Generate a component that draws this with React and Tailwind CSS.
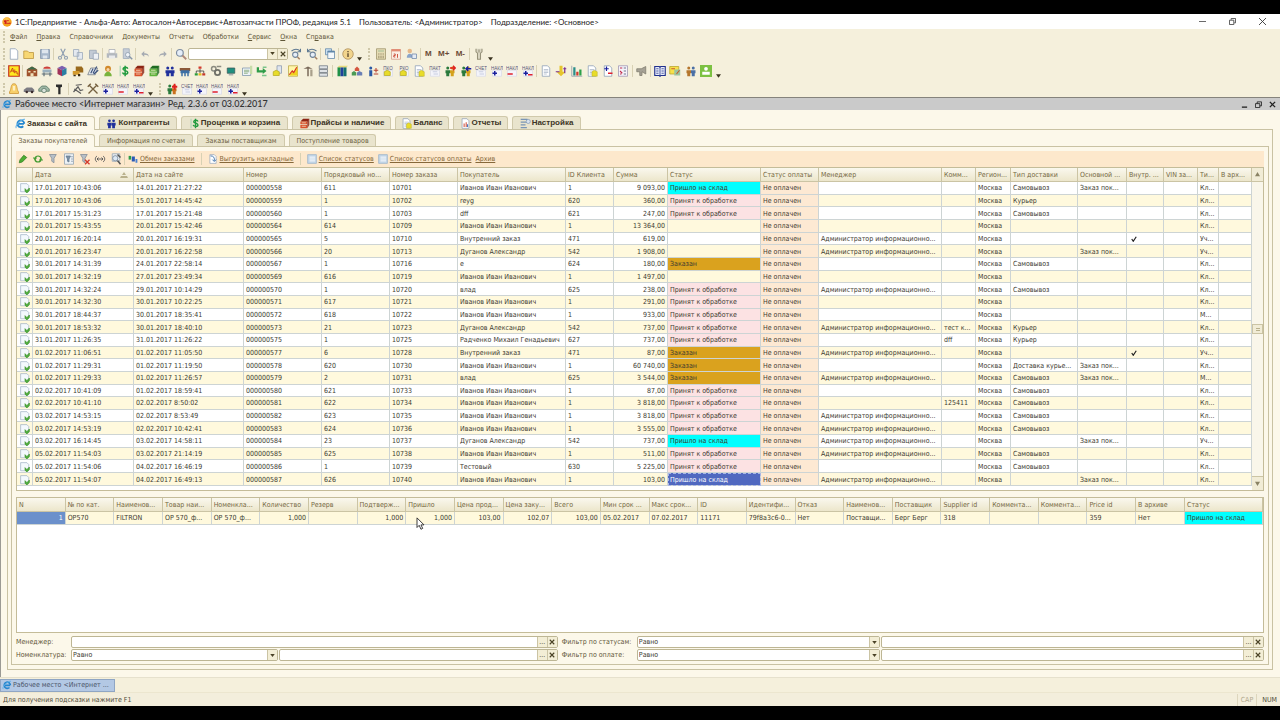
import React, { useState } from 'react';
import clsx from 'clsx';

const doc = <path d="M3 1h7l3 3v11H3z" fill="#fff" stroke="#8a9cb4" />;
const lines = <path d="M5 6h6M5 8h6M5 10h6M5 12h4" stroke="#a9b6c8" />;

const labelled = (label, extra) => (
    <>
        <path d="M2 7h12v8H2z" fill="#f4f4fa" stroke="#d9dbe8" />
        <text x="8" y="6" fontSize="6" textAnchor="middle" fill="#55557a" fontFamily="Liberation Sans">{label}</text>
        {extra}
    </>
);
const plus = <path d="M2 11h6M5 8v6" stroke="#1a1f9c" strokeWidth="2" />;
const minus = <path d="M2 12h7" stroke="#e0202c" strokeWidth="2" />;
const box = <path d="M3 9l4-2 4 2v5H3z" fill="#e8dc2a" stroke="#b5a91c" />;

const people = (a, b) => (
    <>
        <circle cx="5" cy="4" r="2" fill={a} />
        <path d="M2 7h6v4H7v4H3v-4H2z" fill={a} />
        <circle cx="11" cy="4" r="2" fill={b} />
        <path d="M8 7h6v4h-1v4H9v-4H8z" fill={b} />
    </>
);
const books = (top, side) => (
    <>
        <path d="M3 4l3-3h9l-2 4H3z" fill={top} />
        <path d="M2 5h10v4H2zM2 10h10v5H2z" fill={side} />
        <path d="M12 5l3-4v9l-3 5z" fill={top} opacity=".8" />
        <path d="M4 7h6M4 12h6" stroke="#f4ead0" />
    </>
);
const funnel = <path d="M2 2h9L8 7v6l-3-2V7z" fill="#b9c0c8" stroke="#7f8a96" />;

const icons = {
    onec: <><circle cx="8" cy="8" r="7.5" fill="#f5a21c" /><circle cx="7" cy="6" r="5" fill="#f9c24a" /><path d="M3 7l2-1v5M11 6H8a2 2 0 0 0 0 4h6" fill="none" stroke="#d1201b" strokeWidth="1.8" /></>,
    ie: <><path d="M13 8.500H4M13.500 8.500a5 5 0 1 0-1.500 3.500" fill="none" stroke="#2486cf" strokeWidth="2.600" /><path d="M2 14.500C-1 12 9 1 14.500 2" fill="none" stroke="#67b4e8" strokeWidth="1.600" /></>,
    blank: doc,
    folder: <path d="M1 4h5l2 2h6v8H1z" fill="#f7d774" stroke="#b8923a" />,
    save: <><path d="M2 2h12v12H2z" fill="#a9b9cc" stroke="#8093ab" /><path d="M4 2h8v5H4zM5 10h6v4H5z" fill="#dfe6ee" /></>,
    cut: <><path d="M5 1l5 10M11 1L6 11" stroke="#8f9eb0" strokeWidth="1.6" /><circle cx="4" cy="13" r="2" fill="none" stroke="#8f9eb0" strokeWidth="1.5" /><circle cx="12" cy="13" r="2" fill="none" stroke="#8f9eb0" strokeWidth="1.5" /></>,
    copy: <path d="M2 2h7v9H2zM7 6h7v9H7z" fill="#e4e9f0" stroke="#98a6b8" />,
    paste: <><path d="M2 3h9v11H2z" fill="#c2cad5" stroke="#93a0b1" /><path d="M7 7h7v8H7z" fill="#eef1f5" stroke="#93a0b1" /></>,
    print: <><path d="M4 2h8v5H4z" fill="#fff" stroke="#a5aab2" /><path d="M1 7h14v6H1z" fill="#b3b8bf" /><path d="M4 10h8v4H4z" fill="#e9eaec" /></>,
    preview: <><path d="M3 1h8v13H3z" fill="#c7ced8" stroke="#9ba8b8" /><circle cx="9" cy="9" r="3" fill="#eef2f7" stroke="#8796a8" /><path d="M11 11l4 4" stroke="#8796a8" strokeWidth="2" /></>,
    undo: <path d="M7 4L3 8l4 4V9c4 0 5 1 6 3 0-4-2-5-6-5z" fill="#a6abb2" />,
    redo: <path d="M9 4l4 4-4 4V9c-4 0-5 1-6 3 0-4 2-5 6-5z" fill="#a6abb2" />,
    search: <><circle cx="6.5" cy="6.5" r="4.5" fill="#e6eef8" stroke="#7f8ea2" strokeWidth="1.6" /><path d="M10 10l5 5" stroke="#b08a7a" strokeWidth="2.4" /></>,
    findNext: <><circle cx="7" cy="9" r="3.5" fill="#e6eef8" stroke="#71859b" strokeWidth="1.4" /><path d="M10 12l3 3" stroke="#a37f62" strokeWidth="2" /><path d="M2 4c4-3 8-3 12 0M14 1v4h-4" fill="none" stroke="#5d7891" strokeWidth="1.4" /></>,
    findPrev: <><circle cx="9" cy="9" r="3.5" fill="#e6eef8" stroke="#71859b" strokeWidth="1.4" /><path d="M12 12l3 3" stroke="#a37f62" strokeWidth="2" /><path d="M2 4c4-3 8-3 12 0M2 1v4h4" fill="none" stroke="#5d7891" strokeWidth="1.4" /></>,
    windows: <><path d="M2 1h8v8H2z" fill="#c9dff0" stroke="#5f86a8" /><path d="M5 4h9v10H5z" fill="#f3f8fc" stroke="#5f86a8" /><path d="M5 5h9" stroke="#5f86a8" strokeWidth="2" /></>,
    info: <><circle cx="8" cy="8" r="7" fill="#f2d48c" stroke="#a98a55" /><path d="M8 7v5M8 4v1.5" stroke="#6b5636" strokeWidth="2" /></>,
    calc: <><path d="M2 1h12v14H2z" fill="#e5dcb4" stroke="#9c9168" /><path d="M4 3h8v2H4z" fill="#b7c9a0" /><path d="M4 8h8M4 11h8M4 13h8" stroke="#8d7f5c" strokeDasharray="2 1" /></>,
    calendar: <><path d="M2 2h12v13H2z" fill="#fbeee4" stroke="#d09c88" /><path d="M2 3h12" stroke="#e28a72" strokeWidth="3" /><path d="M5 8h2v2H5v2h2M10 8v5" fill="none" stroke="#c94632" strokeWidth="1.2" /></>,
    userLock: <><circle cx="5" cy="4" r="3" fill="#e6b889" /><path d="M1 13c0-7 8-7 8 0z" fill="#8aa4c9" /><path d="M8 8h6v6H8z" fill="#e5ebf4" stroke="#6f87a8" /></>,
    wrench: <path d="M4 1v4l2 2v8h4V7l2-2V1M8 2v4" fill="#d9d5c2" stroke="#969179" strokeWidth="1.4" />,
    an: <><path d="M1 1h14v14H1z" fill="#ffe91f" stroke="#c4301c" strokeWidth="1.6" /><path d="M3 10l3-6 2 6M4 8h3M9 11V6M9 9h3v3h2" fill="none" stroke="#c4301c" strokeWidth="1.1" /></>,
    house: <><path d="M1 6l7-4 7 4v9H1z" fill="#a0522d" /><path d="M1 6l7-4 7 4z" fill="#3b6b4a" /><path d="M3 8h3v2H3zM10 8h3v2h-3zM6 11h4v4H6z" fill="#f0e2bb" /></>,
    bench: <><path d="M3 5c0-4 10-4 10 0z" fill="#cc3f3a" /><path d="M2 6h12v4H2z" fill="#9ab0be" /><path d="M4 10v5M12 10v5M1 12h14" stroke="#5f6f78" strokeWidth="1.6" /></>,
    cube: <><path d="M2 4l6-3 6 3-6 3z" fill="#7d5fb0" /><path d="M2 4l6 3v8l-6-3z" fill="#a0325a" /><path d="M14 4L8 7v8l6-3z" fill="#2b7fa3" /></>,
    carGold: <><path d="M5 2h8l2 3v5H5z" fill="#9a6a1c" /><path d="M1 8h9v5H1z" fill="#d49a2c" /><path d="M2 13h3v2H2zM8 12h3v3H8z" fill="#3c2c12" /></>,
    notes: <><path d="M1 13l4-9h9l-3 9z" fill="#e4e8ee" stroke="#6b7480" /><path d="M5 11l3-6M8 11l5-9M9 12l6-5" stroke="#39507c" strokeWidth="1.5" /></>,
    person: <><circle cx="8" cy="5" r="4" fill="#d28a2c" /><circle cx="8" cy="6" r="2" fill="#f6d7ae" /><path d="M3 15c0-8 10-8 10 0z" fill="#79b33c" /></>,
    dollar: <><path d="M2 1h2v14H2z" fill="#b9d9bb" /><path d="M13 5c-1-3-7-2-6 1 1 2 6 1 6 4s-6 3-7 0M9.500 1v14" fill="none" stroke="#1f9a3d" strokeWidth="2" /></>,
    booksRed: books('#8c2414', '#d9522c'),
    booksGreen: books('#1f6b22', '#5fb33c'),
    peopleBlue: people('#20309c', '#20309c'),
    crowd: <><path d="M1 4h14v4H1z" fill="#8c5a3a" /><path d="M2 7h12v4H2zM3 11h2v4H3zM7 11h2v4H7zM11 11h2v4h-2z" fill="#3c6fa5" /></>,
    tree: <><path d="M8 5v3M3 11V8h10v3M8 8v3" fill="none" stroke="#333" /><path d="M6 2h4v3H6z" fill="#d33b2c" /><path d="M1 11h4v3H1z" fill="#2c9c3a" /><path d="M6 11h4v3H6z" fill="#e5b91c" /><path d="M11 11h4v3h-4z" fill="#c43a2c" /></>,
    gears: <><circle cx="5" cy="5" r="3" fill="none" stroke="#8b8b80" strokeWidth="2" /><circle cx="10" cy="10" r="3.500" fill="none" stroke="#6f7068" strokeWidth="2.400" /><path d="M9 2h6" stroke="#8b8b80" strokeWidth="2" /></>,
    monitor: <><path d="M3 4h10v7H3z" fill="#1f8f7f" stroke="#3c5a5a" /><path d="M5 13h6" stroke="#aab2b2" strokeWidth="2" /></>,
    sheetGreen: <><path d="M2 4h11v10H2z" fill="#eef3f7" stroke="#7b93a8" /><path d="M4 7h7M4 9h7M4 11h5" stroke="#7aa06b" /><path d="M12 1h3v11h-3z" fill="#c7dca8" /></>,
    exchange: <><path d="M1 3h3v4h5V4l5 4-5 4v-2H1z" fill="#2f9c48" /><path d="M9 2h5v2H9zM8 13h6v2H8z" fill="#7cc48a" /></>,
    boxDoc: <><path d="M8 1h6v10H8z" fill="#dfe5ee" stroke="#8a98ae" />{box}</>,
    chart: <><path d="M2 1h12v14H2z" fill="#fff7a8" stroke="#b9a645" /><path d="M3 14l4-5 2 2 5-8v11z" fill="#f0d21c" /><path d="M3 13l4-5 2 2 4-7" fill="none" stroke="#d8321f" strokeWidth="1.6" /></>,
    lift: <><path d="M2 5l6-3 6 3H2zM7 5h2v10H7z" fill="#7a6a5a" /><path d="M11 6h3v9h-3z" fill="#a9a08c" /></>,
    rack: <path d="M3 1h11v4H3zM3 6h11v4H3zM3 11h11v4H3z" fill="#dfe3e6" stroke="#6d7780" />,
    volumes: <><path d="M2 3h4v12H2z" fill="#1f9148" /><path d="M6 3h4v12H6z" fill="#21409c" /><path d="M10 3h4v12h-4z" fill="#13706f" /><path d="M2 3l2-2h12l-2 2z" fill="#e5d97a" /></>,
    blocks: <><path d="M5 5l3-3 3 3v3H5z" fill="#d4553f" /><path d="M1 10l3-2 3 2v4H1z" fill="#4a9a55" /><path d="M8 10l3-2 4 2v4H8z" fill="#6a7fb5" /></>,
    personPlus: <><circle cx="5" cy="4" r="2" fill="#2a59a5" /><path d="M3 7h4v8H3z" fill="#2a59a5" /><path d="M9 7h6M12 4v6M9 12h6" stroke="#b5402f" strokeWidth="1.400" /></>,
    pko: labelled('ПКО', box),
    rko: labelled('РКО', box),
    docBox: <>{doc}{lines}<path d="M8 9l3-2 4 2v6H8z" fill="#e8dc2a" stroke="#b5a91c" strokeWidth=".6" /></>,
    pact: labelled('ПАКТ', <path d="M5 9h6M6 12h6" stroke="#b9c0d8" />),
    peopleOut: <>{people('#2a7a3c', '#d4a11c')}<path d="M8 4h7M12 1l3 3-3 3" fill="none" stroke="#e02020" strokeWidth="2" /></>,
    peopleIn: <>{people('#2a7a3c', '#d4a11c')}<path d="M8 5h7M11 2L8 5l3 3" fill="none" stroke="#1a1f9c" strokeWidth="2" /></>,
    peopleAdd: <>{people('#2a7a3c', '#c9701c')}<path d="M8 5h7M11.500 1v8" stroke="#e02020" strokeWidth="2.400" /></>,
    bill: labelled('СЧЕТ', <path d="M5 9h6M6 12h6" stroke="#b9c0d8" />),
    naklPlus: labelled('НАКЛ', plus),
    naklMinus: labelled('НАКЛ', minus),
    naklBoth: labelled('НАКЛ', <>{plus}<path d="M8 13h6" stroke="#e0202c" strokeWidth="2" /></>),
    docs: <>{doc}{lines}</>,
    arrows: <><path d="M6 1h4v8h4l-6 6-6-6h4z" fill="#e6c52c" /><path d="M1 9h5M11 5h4M13 3v8" stroke="#7a2f8f" strokeWidth="1.600" /></>,
    bars: <><path d="M1 1v14h14" fill="none" stroke="#8c98a8" /><path d="M3 3h3v11H3z" fill="#2a8f8a" /><path d="M7 9h3v5H7z" fill="#d03a2c" /><path d="M11 6h3v8h-3z" fill="#2ca04a" /></>,
    docSigns: <>{doc}<path d="M3 5h6M6 2v6" stroke="#1a1f9c" strokeWidth="1.600" /><path d="M8 11h6" stroke="#e0202c" strokeWidth="2" /></>,
    docPercent: <><path d="M2 1h12v14H2z" fill="#f6f3fa" stroke="#9c94b0" /><path d="M4 4h3M4 8l3 3M4 12h2" stroke="#c02c4c" strokeWidth="1.500" /><path d="M9 4h3M9 8h3M9 12h3" stroke="#6f7890" strokeWidth="1.500" /></>,
    horn: <path d="M1 5h6l6-3v10L8 9v5H5V9H1z" fill="#a5a195" stroke="#7d796c" />,
    bookOpen: <><path d="M1 2h6l1 1 1-1h6v12H9l-1 1-1-1H1z" fill="#e8ecf8" stroke="#1f2f8c" strokeWidth="1.500" /><path d="M8 3v11M3 5h3M3 8h3M3 11h3M10 5h3M10 8h3M10 11h3" stroke="#1f2f8c" /></>,
    picture: <><path d="M1 2h12v10H1z" fill="#f7e04a" stroke="#b5a32c" /><path d="M7 6h8v8H7z" fill="#9cc5a0" /><path d="M3 5h5M10 12l4-5" stroke="#c55a2c" strokeWidth="1.500" /></>,
    couple: people('#b5762c', '#4a6fa5'),
    greenUser: <><path d="M0 0h16v16H0z" fill="#7cc142" /><circle cx="8" cy="5" r="2.500" fill="#fff" /><path d="M3 13V9h10v4z" fill="#fff" /></>,
    bell: <><path d="M8 1c5 0 3 7 6 11v2H2v-2C5 8 3 1 8 1z" fill="#f7cf6b" stroke="#c9902f" /><path d="M8 4v6" stroke="#fdf0c4" strokeWidth="3" /></>,
    carGrey: <><path d="M1 9l4-3h7l3 3v3H1z" fill="#7d7c83" /><circle cx="5" cy="12" r="1.700" fill="#3a2b2b" /><circle cx="12" cy="12" r="1.700" fill="#3a2b2b" /></>,
    carGreen: <><path d="M1 8l4-4h6l4 4v3H1z" fill="#9fb7a6" stroke="#547360" /><circle cx="8" cy="10" r="3" fill="#d9e2da" stroke="#547360" /></>,
    tool: <path d="M4 2h8v3l-2 1v9H7V6L4 5z" fill="#2b2b2b" />,
    runner: <path d="M2 12l6-7 3 5 4-1M5 3l8-1M3 8l9 6" fill="none" stroke="#5c5c5c" strokeWidth="1.600" />,
    hammers: <path d="M2 14L13 3M3 3l11 11M1 5l4-4M11 1l4 4" fill="none" stroke="#75603f" strokeWidth="1.800" />,
    pencil: <path d="M3 13l1-4 5-6 4 3-6 6z" fill="#4dae33" stroke="#2f7a1e" />,
    refresh: <path d="M4 7c1-4 7-4 8 0M12 9c-1 4-7 4-8 0M2 6l2 3 2-3M14 10l-2-3-2 3" fill="none" stroke="#3f9a2f" strokeWidth="1.600" />,
    funnel,
    funnelList: <><path d="M2 1h12v14H2z" fill="#eef2f6" stroke="#8fa0b2" /><path d="M4 4h6L8 8v4l-2-1V8zM11 5h2M11 8h2M11 11h2" fill="#7f93a8" stroke="#63788f" /></>,
    funnelOff: <>{funnel}<path d="M8 9l6 6M14 9l-6 6" stroke="#d2382c" strokeWidth="1.800" /></>,
    span: <path d="M4 4c-3 2-3 6 0 8M12 4c3 2 3 6 0 8M4 8h8M6 6L4 8l2 2M10 6l2 2-2 2" fill="none" stroke="#555" strokeWidth="1.200" />,
    searchDoc: <><path d="M3 1h10v10H3z" fill="#eef2f6" stroke="#8fa0b2" /><circle cx="7" cy="7" r="3.500" fill="#dce8f4" stroke="#6d7d90" /><path d="M10 10l4 5M10 2l4 4" stroke="#555" strokeWidth="2" /></>,
    swap: <><path d="M1 3h4v6H1z" fill="#2c9c48" /><path d="M6 4h5v8H6z" fill="#2a59b5" /><path d="M12 8h3v6h-3z" fill="#4a80d0" /></>,
    export: <>{doc}<path d="M4 3c5 0 7 3 6 8M7 9l3 3 3-3" fill="none" stroke="#4a7ab0" strokeWidth="1.600" /></>,
    list: <><path d="M1 1h14v14H1z" fill="#c3d6e8" stroke="#8fabc5" /><path d="M4 5h9M4 8h9M4 11h9" stroke="#fff" strokeWidth="1.400" /></>,
    report: <>{doc}<path d="M6 8v5M9 6v7" stroke="#d0503c" strokeWidth="1.500" /><path d="M11 9v4" stroke="#3c6fc0" strokeWidth="1.500" /></>,
    settings: <><path d="M1 2h10M1 6h9M1 10h7M1 14h9" stroke="#7a95b5" strokeWidth="2" /><circle cx="12" cy="5" r="3" fill="#d9e3ee" stroke="#7a95b5" /></>,
    rowDoc: <><path d="M1 1h10l3 3v10H1z" fill="#f4f9fd" stroke="#93a9bd" /><path d="M8 9l3 3 4-4v4l-4 4-3-3z" fill="#4fae3c" stroke="#3a8f2a" /></>,
};

const Icon = ({ name, className = 'size-[12px]' }) => (
    <svg viewBox="0 0 16 16" className={clsx('shrink-0', className)} aria-hidden="true">{icons[name]}</svg>
);

const menu = [
    ['', 'Ф', 'айл'], ['', 'П', 'равка'], ['Справочники', '', ''], ['Документы', '', ''], ['Отчеты', '', ''],
    ['Обработки', '', ''], ['', 'С', 'ервис'], ['', 'О', 'кна'], ['Сп', 'р', 'авка'],
];

const ToolGroup = ({ width = '', items }) => (
    <div className={clsx('flex justify-between shrink-0', width)}>
        {items.map((name, i) => (
            <button key={i} type="button" aria-label={name} className="flex w-[13px] h-[14px] items-center justify-center">
                <Icon name={name} />
            </button>
        ))}
    </div>
);

const Sep = () => <div className="flex w-[5px] shrink-0 justify-center"><span className="w-px h-[12px] bg-[#d8d1b4]" /></div>;
const Grip = ({ width = 'w-[7px]' }) => (
    <div className={clsx('flex shrink-0 justify-center', width)}><span className="h-[12px] border-l-2 border-dotted border-[#cfc8aa]" /></div>
);
const More = () => (
    <button type="button" aria-label="Еще" className="flex w-[10px] h-[14px] shrink-0 items-end justify-center">
        <svg viewBox="0 0 6 4" className="w-[5px] h-[4px]"><path d="M0 0h6L3 4z" fill="#3a3320" /></svg>
    </button>
);

const mainTabs = [
    { label: 'Заказы с сайта', icon: 'ie', width: 'w-[88px]' },
    { label: 'Контрагенты', icon: 'peopleBlue', width: 'w-[78px]' },
    { label: 'Проценка и корзина', icon: 'dollar', width: 'w-[107px]' },
    { label: 'Прайсы и наличие', icon: 'booksRed', width: 'w-[99px]' },
    { label: 'Баланс', icon: 'docBox', width: 'w-[54px]' },
    { label: 'Отчеты', icon: 'report', width: 'w-[55px]' },
    { label: 'Настройка', icon: 'settings', width: 'w-[69px]' },
];

const subTabs = [
    { label: 'Заказы покупателей', width: 'w-[84px]' },
    { label: 'Информация по счетам', width: 'w-[94px]' },
    { label: 'Заказы поставщикам', width: 'w-[88px]' },
    { label: 'Поступление товаров', width: 'w-[87px]' },
];

const orderColumns = [
    ['', 'w-[16px]'], ['Дата', 'w-[101px]'], ['Дата на сайте', 'w-[110px]'], ['Номер', 'w-[78px]'],
    ['Порядковый но...', 'w-[68px]'], ['Номер заказа', 'w-[68px]'], ['Покупатель', 'w-[108px]'],
    ['ID Клиента', 'w-[48px]'], ['Сумма', 'w-[54px]'], ['Статус', 'w-[93px]'], ['Статус оплаты', 'w-[58px]'],
    ['Менеджер', ''], ['Комм...', 'w-[34px]'], ['Регион...', 'w-[35px]'], ['Тип доставки', 'w-[67px]'],
    ['Основной ...', 'w-[49px]'], ['Внутр. ...', 'w-[37px]'], ['VIN за...', 'w-[34px]'], ['Ти...', 'w-[21px]'], ['В арх...', 'w-[33px]'],
];

const IVANOV = 'Иванов Иван Иванович';
const ADMIN = 'Администратор информационно...';
const READY = 'Пришло на склад';
const TAKEN = 'Принят к обработке';
const ORDERED = 'Заказан';
const PICKUP = 'Самовывоз';
const MAIN = 'Заказ пок...';

// date, site date, number, index, order, customer, client id, sum, status, manager, comment, delivery, main order, internal, type
const orders = [
    ['17.01.2017 10:43:06', '14.01.2017 21:27:22', '000000558', '611', '10701', IVANOV, '1', '9 093,00', READY, '', '', PICKUP, MAIN, false, 'Кл...'],
    ['17.01.2017 10:43:06', '15.01.2017 14:45:42', '000000559', '1', '10702', 'reyg', '620', '360,00', TAKEN, '', '', 'Курьер', '', false, 'Кл...'],
    ['17.01.2017 15:31:23', '17.01.2017 15:21:48', '000000560', '1', '10703', 'dff', '621', '247,00', TAKEN, '', '', PICKUP, '', false, 'Кл...'],
    ['20.01.2017 15:43:55', '20.01.2017 15:42:46', '000000564', '614', '10709', IVANOV, '1', '13 364,00', '', '', '', '', '', false, 'Кл...'],
    ['20.01.2017 16:20:14', '20.01.2017 16:19:31', '000000565', '5', '10710', 'Внутренний заказ', '471', '619,00', '', ADMIN, '', '', '', true, 'Уч...'],
    ['20.01.2017 16:23:47', '20.01.2017 16:22:58', '000000566', '20', '10713', 'Дуганов Александр', '542', '1 908,00', '', ADMIN, '', '', MAIN, false, 'Уч...'],
    ['30.01.2017 14:31:39', '24.01.2017 22:58:14', '000000567', '1', '10716', 'е', '624', '180,00', ORDERED, '', '', PICKUP, '', false, 'Кл...'],
    ['30.01.2017 14:32:19', '27.01.2017 23:49:34', '000000569', '616', '10719', IVANOV, '1', '1 497,00', '', '', '', '', '', false, 'Кл...'],
    ['30.01.2017 14:32:24', '29.01.2017 10:14:29', '000000570', '1', '10720', 'влад', '625', '238,00', TAKEN, ADMIN, '', PICKUP, '', false, 'Кл...'],
    ['30.01.2017 14:32:30', '30.01.2017 10:22:25', '000000571', '617', '10721', IVANOV, '1', '291,00', TAKEN, '', '', '', '', false, 'Кл...'],
    ['30.01.2017 18:44:37', '30.01.2017 18:35:41', '000000572', '618', '10722', IVANOV, '1', '933,00', TAKEN, '', '', '', '', false, 'М...'],
    ['30.01.2017 18:53:32', '30.01.2017 18:40:10', '000000573', '21', '10723', 'Дуганов Александр', '542', '737,00', TAKEN, ADMIN, 'тест к...', 'Курьер', '', false, 'Кл...'],
    ['31.01.2017 11:26:35', '31.01.2017 11:26:22', '000000575', '1', '10725', 'Радченко Михаил Генадьевич', '627', '737,00', TAKEN, '', 'dff', 'Курьер', '', false, 'Кл...'],
    ['01.02.2017 11:06:51', '01.02.2017 11:05:50', '000000577', '6', '10728', 'Внутренний заказ', '471', '87,00', ORDERED, ADMIN, '', '', '', true, 'Уч...'],
    ['01.02.2017 11:29:31', '01.02.2017 11:19:50', '000000578', '620', '10730', IVANOV, '1', '60 740,00', ORDERED, '', '', 'Доставка курье...', MAIN, false, 'Кл...'],
    ['01.02.2017 11:29:33', '01.02.2017 11:26:57', '000000579', '2', '10731', 'влад', '625', '3 544,00', ORDERED, ADMIN, '', PICKUP, MAIN, false, 'М...'],
    ['02.02.2017 10:41:09', '01.02.2017 18:59:41', '000000580', '621', '10733', IVANOV, '1', '87,00', TAKEN, '', '', PICKUP, '', false, 'Кл...'],
    ['02.02.2017 10:41:10', '02.02.2017 8:50:02', '000000581', '622', '10734', IVANOV, '1', '3 818,00', TAKEN, '', '125411', PICKUP, '', false, 'Кл...'],
    ['03.02.2017 14:53:15', '02.02.2017 8:53:49', '000000582', '623', '10735', IVANOV, '1', '3 818,00', TAKEN, ADMIN, '', PICKUP, '', false, 'Кл...'],
    ['03.02.2017 14:53:19', '02.02.2017 10:42:41', '000000583', '624', '10736', IVANOV, '1', '3 555,00', TAKEN, ADMIN, '', PICKUP, '', false, 'Кл...'],
    ['03.02.2017 16:14:45', '03.02.2017 14:58:11', '000000584', '23', '10737', 'Дуганов Александр', '542', '737,00', READY, ADMIN, '', '', MAIN, false, 'Уч...'],
    ['05.02.2017 11:54:03', '03.02.2017 21:14:19', '000000585', '625', '10738', IVANOV, '1', '511,00', TAKEN, ADMIN, '', PICKUP, '', false, 'Кл...'],
    ['05.02.2017 11:54:06', '04.02.2017 16:46:19', '000000586', '1', '10739', 'Тестовый', '630', '5 225,00', TAKEN, '', '', PICKUP, '', false, 'Кл...'],
    ['05.02.2017 11:54:07', '04.02.2017 16:49:13', '000000587', '626', '10740', IVANOV, '1', '103,00', READY, ADMIN, '', '', MAIN, false, 'Кл...'],
];

const itemColumns = [
    ['N', '1', 'right'], ['№ по кат.', 'OP570'], ['Наименов...', 'FILTRON'], ['Товар наи...', 'OP 570_ф...'],
    ['Номенкла...', 'OP 570_ф...'], ['Количество', '1,000', 'right'], ['Резерв', ''], ['Подтверж...', '1,000', 'right'],
    ['Пришло', '1,000', 'right'], ['Цена прод...', '103,00', 'right'], ['Цена заку...', '102,07', 'right'], ['Всего', '103,00', 'right'],
    ['Мин срок ...', '05.02.2017'], ['Макс срок...', '07.02.2017'], ['ID', '11171'], ['Идентифи...', '79f8a3c6-0...'],
    ['Отказ', 'Нет'], ['Наименов...', 'Поставщи...'], ['Поставщик', 'Берг Берг'], ['Supplier id', '318'],
    ['Коммента...', ''], ['Коммента...', ''], ['Price id', '359'], ['В архиве', 'Нет'], ['Статус', READY],
];

const statusColors = {
    [READY]: 'bg-[#00ffff]',
    [TAKEN]: 'bg-[#fce2e3]',
    [ORDERED]: 'bg-[#daa21e]',
};

const cell = 'border-b border-r border-[#cdd4d4] px-[2px] whitespace-nowrap overflow-hidden';
const head = 'h-[14px] border-b border-r border-[#cbc4a4] bg-linear-to-b from-[#faf8ee] to-[#ece6cb] px-[2px] text-left font-normal text-[#75683f] whitespace-nowrap overflow-hidden';

const OrdersTable = () => (
    <table className="h-[318px] w-full table-fixed border-separate border-spacing-0 leading-[10px] [&_td]:pt-px">
        <colgroup>
            {orderColumns.map(([, width], i) => <col key={i} className={width} />)}
        </colgroup>
        <thead>
            <tr>
                {orderColumns.map(([label], i) => (
                    <th key={i} className={head}>
                        {label === 'Дата' ? (
                            <span className="flex items-center justify-between pr-[3px]">
                                {label}
                                <svg viewBox="0 0 8 6" className="w-[8px] h-[6px]"><path d="M4 0l2 3H2zM1 4h6l1 2H0z" fill="#b9b18c" /></svg>
                            </span>
                        ) : label}
                    </th>
                ))}
            </tr>
        </thead>
        <tbody>
            {orders.map((o, i) => {
                const selected = i === orders.length - 1;
                return (
                    <tr key={o[2]} className="odd:bg-white even:bg-[#fff9dd]">
                        <td className={cell}><Icon name="rowDoc" className="mx-auto size-[10px]" /></td>
                        {o.slice(0, 7).map((value, j) => <td key={j} className={cell}>{value}</td>)}
                        <td className={clsx(cell, 'text-right')}>{o[7]}</td>
                        <td className={clsx(cell, selected ? 'bg-[#5068c0] text-white outline-1 outline-dashed -outline-offset-1 outline-[#a9b6e6]' : statusColors[o[8]])}>{o[8]}</td>
                        <td className={clsx(cell, 'bg-[#fde9d3]')}>Не оплачен</td>
                        <td className={cell}>{o[9]}</td>
                        <td className={cell}>{o[10]}</td>
                        <td className={cell}>Москва</td>
                        <td className={cell}>{o[11]}</td>
                        <td className={cell}>{o[12]}</td>
                        <td className={cell}>
                            {o[13] && <svg viewBox="0 0 8 8" className="ml-[2px] size-[6px]"><path d="M1 4l2 3 4-6" fill="none" stroke="#222" strokeWidth="1.600" /></svg>}
                        </td>
                        <td className={cell} />
                        <td className={cell}>{o[14]}</td>
                        <td className={cell} />
                    </tr>
                );
            })}
        </tbody>
    </table>
);

const ItemsTable = () => (
    <table className="w-full table-fixed border-separate border-spacing-0 leading-[12px]">
        <colgroup>
            {itemColumns.map((c, i) => <col key={i} className={i === itemColumns.length - 1 ? 'w-[78px]' : ''} />)}
        </colgroup>
        <thead>
            <tr>{itemColumns.map(([label], i) => <th key={i} className={head}>{label}</th>)}</tr>
        </thead>
        <tbody>
            <tr className="bg-[#fff9dd]">
                {itemColumns.map(([, value, align], i) => (
                    <td key={i} className={clsx(cell, align === 'right' && 'text-right', i === 0 && 'bg-[#6b90cb] text-white', statusColors[value])}>{value}</td>
                ))}
            </tr>
        </tbody>
    </table>
);

const ArrowDown = () => <svg viewBox="0 0 6 4" className="w-[5px] h-[3px]"><path d="M0 0h6L3 4z" fill="#4a4226" /></svg>;
const fieldButton = 'flex w-[10px] h-full shrink-0 items-center justify-center border-l border-[#cbc4a4] bg-[#f3eed6] text-[#4a4226]';
const fieldBox = 'flex h-[12px] items-center overflow-hidden rounded-[2px] border border-[#bdb694] bg-white';

const PickButtons = ({ label }) => (
    <>
        <button type="button" aria-label={`Выбрать: ${label}`} className={fieldButton}>...</button>
        <button type="button" aria-label={`Очистить: ${label}`} className={fieldButton}>
            <svg viewBox="0 0 8 8" className="size-[6px]"><path d="M1 1l6 6M7 1L1 7" stroke="#4a4226" strokeWidth="1.500" /></svg>
        </button>
    </>
);

const CompareField = ({ id, label, width }) => (
    <div className="flex gap-px">
        <div className={clsx(fieldBox, width)}>
            <select id={id} className="h-full min-w-0 flex-1 appearance-none px-px leading-[10px] text-[#3d3a30] outline-none">
                <option>Равно</option>
            </select>
            <span className={fieldButton}><ArrowDown /></span>
        </div>
        <div className={clsx(fieldBox, 'flex-1')}>
            <input aria-label={`${label} значение`} className="h-full min-w-0 flex-1 px-px outline-none" />
            <PickButtons label={label} />
        </div>
    </div>
);

const Filters = () => (
    <div className="grid grid-cols-[55px_486fr_79px_626fr] gap-y-px items-center text-[#5f5638]">
        <label htmlFor="manager">Менеджер:</label>
        <div className={fieldBox}>
            <input id="manager" className="h-full min-w-0 flex-1 px-px outline-none" />
            <PickButtons label="Менеджер" />
        </div>
        <label htmlFor="status" className="pl-1">Фильтр по статусам:</label>
        <CompareField id="status" label="Статус" width="w-[243px]" />
        <label htmlFor="item">Номенклатура:</label>
        <CompareField id="item" label="Номенклатура" width="w-[207px]" />
        <label htmlFor="payment" className="pl-1">Фильтр по оплате:</label>
        <CompareField id="payment" label="Оплата" width="w-[243px]" />
    </div>
);

const Command = ({ icon, children }) => (
    <button type="button" className="flex items-center gap-[2px] whitespace-nowrap text-[#86683a]">
        {icon && <Icon name={icon} className="size-[10px]" />}
        <span className="underline underline-offset-1">{children}</span>
    </button>
);

const App = () => {
    const [tab, setTab] = useState(0);
    const [subTab, setSubTab] = useState(0);

    return (
        <div className="flex min-h-screen flex-col bg-black py-[14px] font-['DejaVu_Sans_Condensed','DejaVu_Sans',sans-serif] text-[7px] leading-[12px] text-[#3d3a30]">
            <header className="flex h-[15px] items-center bg-white font-['Lato',sans-serif] text-[8px] text-[#222]">
                <Icon name="onec" className="mx-[2px] size-[10px]" />
                <h1 className="flex-1 whitespace-pre pl-px">{'1С:Предприятие - Альфа-Авто: Автосалон+Автосервис+Автозапчасти ПРОФ, редакция 5.1    Пользователь: <Администратор>    Подразделение: <Основное>'}</h1>
                <div className="flex gap-[23px] pr-[14px]">
                    <button type="button" aria-label="Свернуть"><svg viewBox="0 0 8 8" className="size-[7px]"><path d="M0 4h8" stroke="#555" /></svg></button>
                    <button type="button" aria-label="Развернуть"><svg viewBox="0 0 8 8" className="size-[7px]"><path d="M.5 2.500h5v5h-5zM2.500 2V.5h5v5H6" fill="none" stroke="#444" /></svg></button>
                    <button type="button" aria-label="Закрыть"><svg viewBox="0 0 8 8" className="size-[7px]"><path d="M0 0l8 8M8 0L0 8" stroke="#333" /></svg></button>
                </div>
            </header>

            <div className="bg-[#f5f0dc]">
                <nav className="flex h-[16px] items-center text-[#5f5638]">
                    <Grip />
                    <div className="flex gap-[9px] pl-[3px]">
                        {menu.map(([before, key, after]) => (
                            <button key={before + key} type="button">{before}<span className="underline">{key}</span>{after}</button>
                        ))}
                    </div>
                </nav>
                <div className="flex h-[17px] items-center">
                    <Grip />
                    <ToolGroup width="w-[44px]" items={['blank', 'folder', 'save']} />
                    <Sep />
                    <ToolGroup width="w-[44px]" items={['cut', 'copy', 'paste']} />
                    <Sep />
                    <ToolGroup width="w-[28px]" items={['print', 'preview']} />
                    <Sep />
                    <ToolGroup width="w-[31px]" items={['undo', 'redo']} />
                    <Sep />
                    <ToolGroup items={['search']} />
                    <div className={clsx(fieldBox, 'ml-px mr-px w-[100px]')}>
                        <input aria-label="Поиск" className="h-full min-w-0 flex-1 px-px outline-none" />
                        <button type="button" aria-label="История" className={fieldButton}><ArrowDown /></button>
                        <button type="button" aria-label="Очистить" className={fieldButton}>
                            <svg viewBox="0 0 8 8" className="size-[6px]"><path d="M1 1l6 6M7 1L1 7" stroke="#4a4226" strokeWidth="1.500" /></svg>
                        </button>
                    </div>
                    <ToolGroup width="w-[29px]" items={['findNext', 'findPrev']} />
                    <Sep />
                    <ToolGroup items={['windows']} />
                    <Sep />
                    <ToolGroup items={['info']} />
                    <More />
                    <Grip width="w-[10px]" />
                    <ToolGroup width="w-[44px]" items={['calc', 'calendar', 'userLock']} />
                    <Sep />
                    <div className="flex w-[44px] justify-between px-[2px] font-['Liberation_Sans',sans-serif] text-[8px] font-bold text-[#6b4a35]">
                        <button type="button">M</button>
                        <button type="button">M+</button>
                        <button type="button">M-</button>
                    </div>
                    <Sep />
                    <ToolGroup items={['wrench']} />
                    <More />
                </div>
                <div className="flex h-[18px] items-center">
                    <Grip />
                    <ToolGroup items={['an']} />
                    <Sep />
                    <ToolGroup width="w-[305px]" items={['house', 'bench', 'cube', 'carGold', 'notes', 'person', 'dollar', 'booksRed', 'booksGreen', 'peopleBlue', 'crowd', 'tree', 'gears', 'monitor', 'sheetGreen', 'exchange', 'boxDoc', 'chart', 'lift', 'rack']} />
                    <Sep />
                    <ToolGroup width="w-[199px]" items={['volumes', 'blocks', 'personPlus', 'pko', 'rko', 'docBox', 'pact', 'peopleOut', 'peopleIn', 'bill', 'naklPlus', 'naklMinus', 'naklBoth']} />
                    <Sep />
                    <ToolGroup width="w-[91px]" items={['docs', 'arrows', 'bars', 'docBox', 'docSigns', 'docPercent']} />
                    <Sep />
                    <ToolGroup items={['horn']} />
                    <Sep />
                    <ToolGroup width="w-[60px]" items={['bookOpen', 'picture', 'couple', 'greenUser']} />
                    <More />
                </div>
                <div className="flex h-[17px] items-center">
                    <Grip />
                    <ToolGroup width="w-[59px]" items={['bell', 'carGrey', 'carGreen', 'tool']} />
                    <Sep />
                    <ToolGroup width="w-[74px]" items={['runner', 'hammers', 'naklPlus', 'naklMinus', 'naklBoth']} />
                    <More />
                    <Grip width="w-[10px]" />
                    <ToolGroup width="w-[74px]" items={['peopleAdd', 'bill', 'naklPlus', 'naklMinus', 'naklBoth']} />
                    <More />
                </div>
            </div>

            <div className="flex h-[13px] items-center border-t border-[#85837c] bg-[#cacaca] font-['Lato',sans-serif] text-[9px] font-medium text-[#333]">
                <Icon name="ie" className="mx-[2px] size-[10px]" />
                <h2 className="flex-1 pl-px">Рабочее место &lt;Интернет магазин&gt; Ред. 2.3.6 от 03.02.2017</h2>
                <div className="flex gap-[7px] pr-[4px]">
                    <button type="button" aria-label="Свернуть окно"><svg viewBox="0 0 8 8" className="size-[7px]"><path d="M1 7h6" stroke="#222" strokeWidth="1.500" /></svg></button>
                    <button type="button" aria-label="Развернуть окно"><svg viewBox="0 0 8 8" className="size-[7px]"><path d="M.5 3h5v4.500h-5zM2.500 3V1h5v4.500h-2" fill="none" stroke="#222" /></svg></button>
                    <button type="button" aria-label="Закрыть окно"><svg viewBox="0 0 8 8" className="size-[7px]"><path d="M1 1l6 6M7 1L1 7" stroke="#222" strokeWidth="1.500" /></svg></button>
                </div>
            </div>

            <main className="flex flex-1 flex-col border-l border-[#9b9a94] bg-[#fcf8ea] pt-[6px] pb-[7px] pl-[6px] pr-[7px]">
                <div className="flex gap-[4px]">
                    {mainTabs.map((t, i) => (
                        <button
                            key={t.label}
                            type="button"
                            onClick={() => setTab(i)}
                            className={clsx(
                                "flex h-[13px] items-center justify-center gap-px rounded-t-[3px] border border-b-0 border-[#d0c9ab] font-['Liberation_Sans',sans-serif] text-[8px] font-bold whitespace-nowrap text-[#3d3526]",
                                t.width,
                                i === tab ? 'relative -mb-px h-[14px] bg-[#fcf8ea]' : 'bg-[#e9e4cd]'
                            )}
                        >
                            <Icon name={t.icon} className="size-[11px]" />
                            {t.label}
                        </button>
                    ))}
                </div>

                <div className="flex flex-1 flex-col border border-[#c9c2a3] px-[3px] pt-[4px] pb-[4px]">
                    <div className="flex gap-[4px]">
                        {subTabs.map((t, i) => (
                            <button
                                key={t.label}
                                type="button"
                                onClick={() => setSubTab(i)}
                                className={clsx(
                                    'flex h-[12px] items-center justify-center rounded-t-[3px] border border-b-0 border-[#d0c9ab] whitespace-nowrap text-[#6b6040]',
                                    t.width,
                                    i === subTab ? 'relative -mb-px h-[13px] bg-[#fcf8ea]' : 'bg-[#e9e4cd]'
                                )}
                            >
                                {t.label}
                            </button>
                        ))}
                    </div>

                    <section className="flex flex-1 flex-col border border-[#c9c2a3] px-[4px] pt-[4px] pb-[3px]">
                        <div className="flex h-[16px] items-center bg-[#fde8cc]">
                            <ToolGroup width="w-[106px]" items={['pencil', 'refresh', 'funnel', 'funnelList', 'funnelOff', 'span', 'searchDoc']} />
                            <Sep />
                            <div className="flex items-center gap-[4px] pl-px">
                                <Command icon="swap">Обмен заказами</Command>
                                <Sep />
                                <Command icon="export">Выгрузить накладные</Command>
                                <Sep />
                                <Command icon="list">Список статусов</Command>
                                <Command icon="list">Список статусов оплаты</Command>
                                <Command>Архив</Command>
                            </div>
                        </div>

                        <div className="flex h-[324px] border border-[#c4bc99] bg-white">
                            <div className="min-w-0 flex-1"><OrdersTable /></div>
                            <div className="flex w-[11px] flex-col bg-[#f9f6ea]">
                                <button type="button" aria-label="Вверх" className="flex h-[14px] items-center justify-center border-b border-[#cbc4a4] bg-[#f1ecd6]">
                                    <svg viewBox="0 0 6 6" className="size-[5px]"><path d="M3 0l3 5H0z" fill="#8a8263" /></svg>
                                </button>
                                <div className="flex-1" />
                                <div className="flex h-[10px] items-center justify-center border border-[#cbc4a4] bg-[#f1ecd6]">
                                    <span className="h-[3px] w-[4px] border-y border-[#b9b18c]" />
                                </div>
                                <div className="flex-1" />
                                <button type="button" aria-label="Вниз" className="flex h-[14px] items-center justify-center border-t border-[#cbc4a4] bg-[#f1ecd6]">
                                    <svg viewBox="0 0 6 6" className="size-[5px]"><path d="M3 6l3-5H0z" fill="#8a8263" /></svg>
                                </button>
                            </div>
                        </div>

                        <div className="relative mt-[6px] mb-[3px] flex-1 border border-[#c4bc99] bg-white">
                            <ItemsTable />
                            <svg viewBox="0 0 10 16" className="absolute left-[399px] top-[19px] h-[14px] w-[9px]" aria-hidden="true">
                                <path d="M1 1v11l2.500-2.500L5.500 14l2-1-2-4H9z" fill="#fff" stroke="#222" />
                            </svg>
                        </div>

                        <Filters />
                    </section>
                </div>
            </main>

            <div className="flex h-[15px] items-center border-t border-[#e6e1cd] bg-[#f5f0dc]">
                <button type="button" className="flex h-[13px] w-[115px] items-center gap-px border border-[#8fa6c4] bg-[#b3c8e4] px-px text-[#4a5468]">
                    <Icon name="ie" className="size-[10px]" />
                    Рабочее место &lt;Интернет ...
                </button>
            </div>
            <footer className="flex h-[14px] items-center border-t border-[#ece6cf] bg-[#f3eedc] px-[3px] text-[#4f4a38]">
                <span className="flex-1">Для получения подсказки нажмите F1</span>
                <span className="border-x border-[#ddd6bd] px-[3px] text-[#b0a88c]">CAP</span>
                <span className="pl-[5px]">NUM</span>
            </footer>
        </div>
    );
};

export default App;
